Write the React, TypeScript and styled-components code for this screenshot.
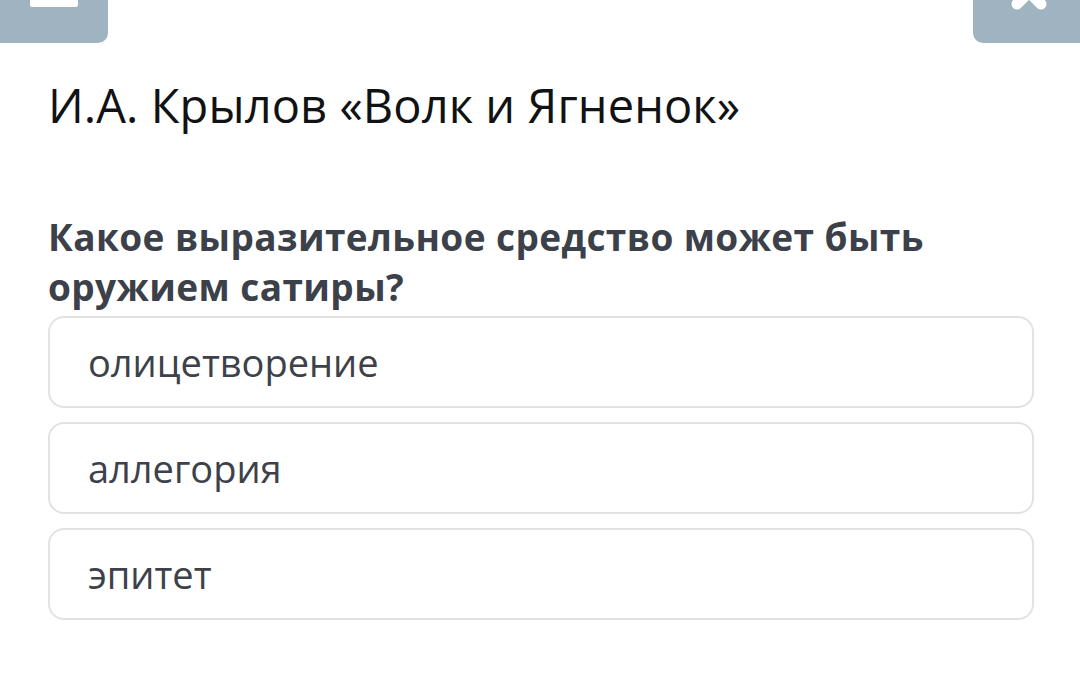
import React from "react";
import styled, { createGlobalStyle } from "styled-components";

const Global = createGlobalStyle`
  html, body { margin: 0; padding: 0; background: #ffffff; }
  body { font-family: "Open Sans", "Noto Sans", sans-serif; }
`;

const Page = styled.div`
  width: 1080px;
  height: 699px;
  overflow: hidden;
  background: #ffffff;
  display: flex;
  flex-direction: column;
`;

const TopBar = styled.div`
  display: flex;
  justify-content: space-between;
  height: 43px;
`;

const BarButton = styled.button<{ $side: "left" | "right" }>`
  width: ${(p) => (p.$side === "left" ? "108px" : "107px")};
  height: 43px;
  border: none;
  padding: 0;
  background: #a0b3c0;
  border-radius: ${(p) => (p.$side === "left" ? "0 0 10px 0" : "0 0 0 10px")};
  position: relative;
  overflow: hidden;
`;

const Dash = styled.span`
  position: absolute;
  left: 30px;
  top: -4px;
  width: 48px;
  height: 11px;
  background: #ffffff;
  border-radius: 2px;
`;

const CloseIcon = styled.svg`
  position: absolute;
  left: 28px;
  top: -36px;
`;

const Content = styled.main`
  padding: 30px 46px 0 48px;
  display: flex;
  flex-direction: column;
`;

const Title = styled.h1`
  margin: 0;
  font-size: 47px;
  font-weight: 400;
  line-height: 64px;
  letter-spacing: 0.1px;
  color: #111214;
`;

const Question = styled.h2`
  margin: 75px 0 0 0;
  font-size: 37px;
  font-weight: 700;
  line-height: 50px;
  letter-spacing: 0.4px;
  color: #3b4049;
`;

const Options = styled.div`
  margin-top: 4px;
  display: flex;
  flex-direction: column;
  gap: 14px;
`;

const Option = styled.div`
  height: 92px;
  box-sizing: border-box;
  border: 2px solid #e2e2e2;
  border-radius: 16px;
  display: flex;
  align-items: center;
  padding-left: 38px;
  font-size: 38px;
  color: #3d4149;
`;

const options = ["олицетворение", "аллегория", "эпитет"];

export default function App() {
  return (
    <Page>
      <Global />
      <TopBar>
        <BarButton $side="left" aria-label="menu">
          <Dash />
        </BarButton>
        <BarButton $side="right" aria-label="close">
          <CloseIcon width="56" height="56" viewBox="0 0 56 56">
            <path
              d="M16 16 L40 40 M40 16 L16 40"
              stroke="#ffffff"
              strokeWidth="11"
              strokeLinecap="round"
              fill="none"
            />
          </CloseIcon>
        </BarButton>
      </TopBar>
      <Content>
        <Title>И.А. Крылов «Волк и Ягненок»</Title>
        <Question>Какое выразительное средство может быть оружием сатиры?</Question>
        <Options>
          {options.map((o) => (
            <Option key={o}>{o}</Option>
          ))}
        </Options>
      </Content>
    </Page>
  );
}
